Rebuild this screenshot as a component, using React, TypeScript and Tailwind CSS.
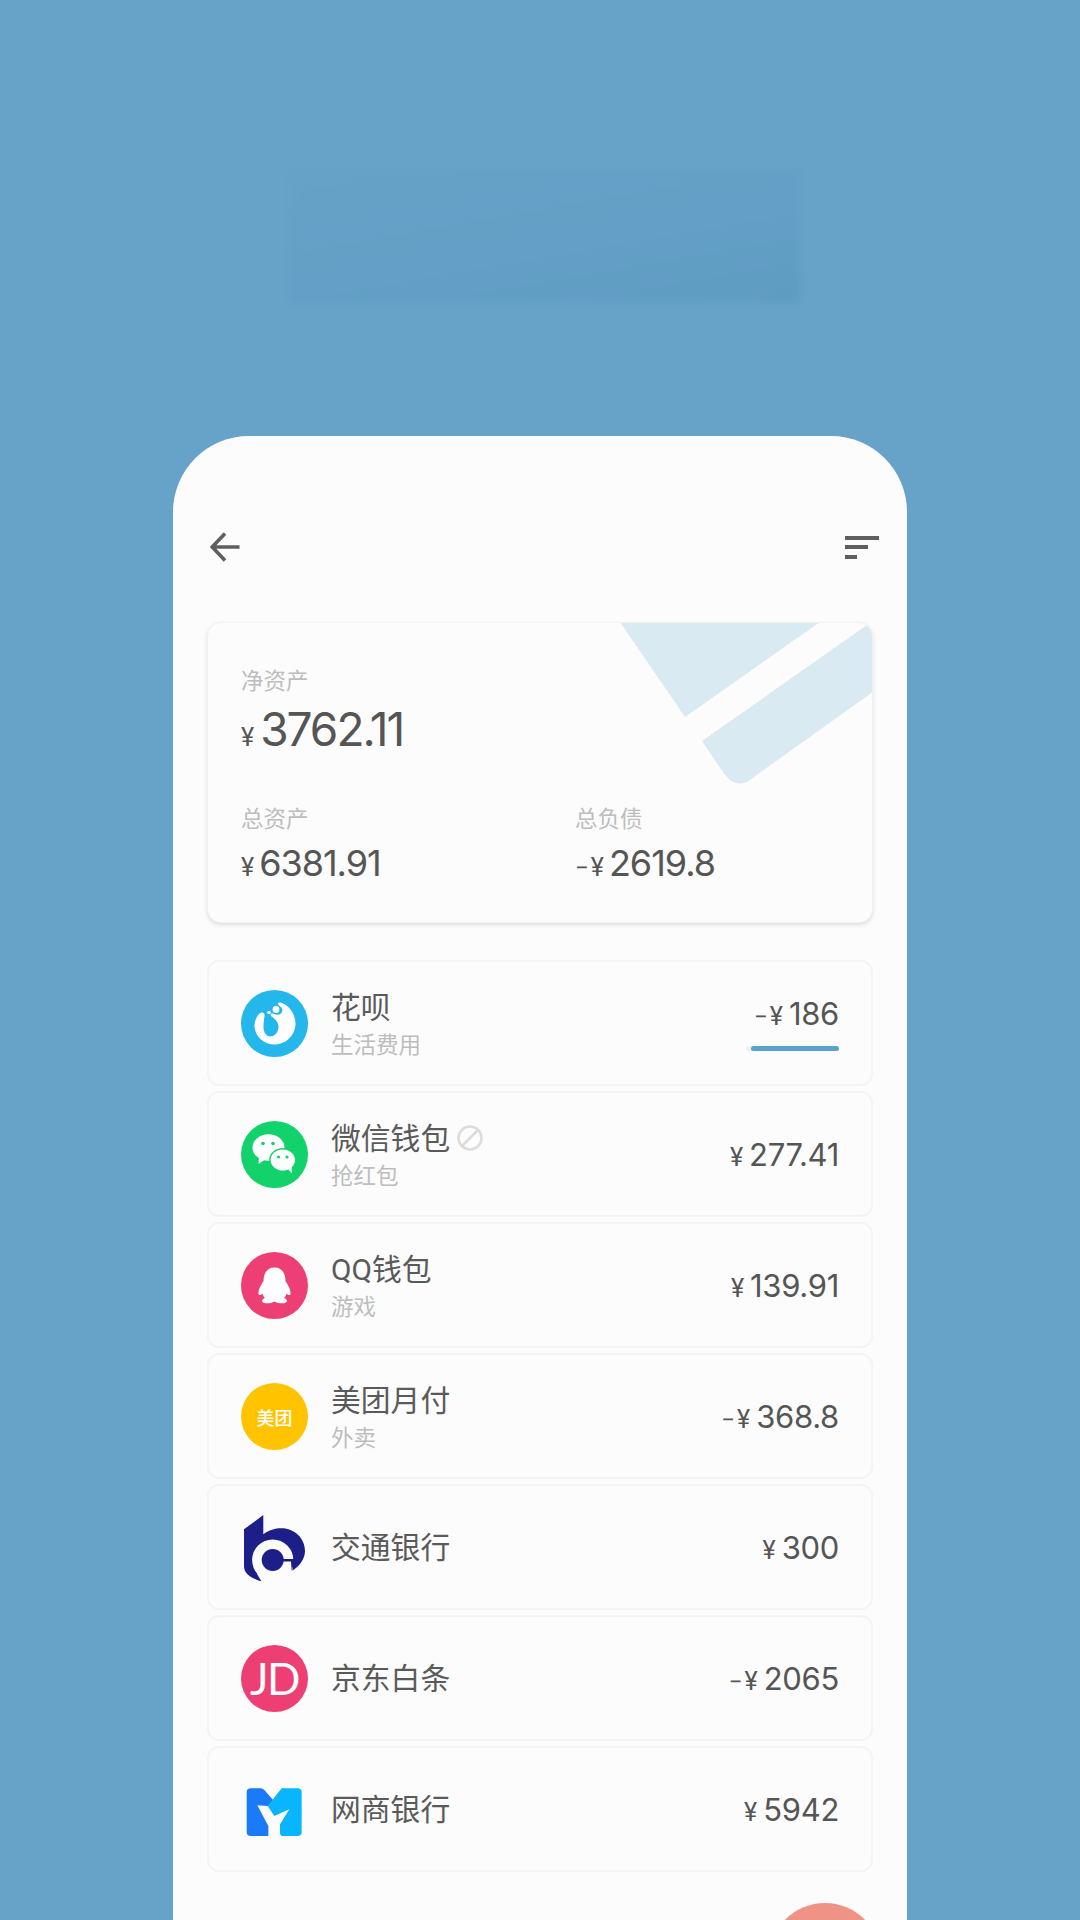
import React from "react";

const cjk = "font-['Noto_Sans_CJK_SC','Noto_Sans',sans-serif]";
const title = "font-['Roboto','Noto_Sans_CJK_SC',sans-serif]";
const num = "font-['Inter','Noto_Sans_CJK_SC',sans-serif]";
const yen = "font-['Roboto',sans-serif]";

function Circle({ color, children }: { color: string; children?: React.ReactNode }) {
  return (
    <svg width="67" height="67" viewBox="0 0 67 67" className="shrink-0">
      <circle cx="33.5" cy="33.5" r="33.5" fill={color} />
      {children}
    </svg>
  );
}

const Huabei = () => (
  <Circle color="#23b7ec">
    <path fill="#fff" d="M20.5 22.5C17 23 13 31 13.5 37C14.5 47 23 54.5 33.5 54.5C45 54.5 54.5 45 54.5 33.5C54.5 24 48 15 39.5 12.5C37 12 36 14 38 15.5C41 17 42 20 41 22C39.5 25 36 25.5 33 24C31 23 29 24 30 26C34 29 37.5 32 37.5 37C37.5 42 33.5 46.5 29.5 46.5C25 46.5 22.5 42 22.5 37C22.5 33 23 29 23.5 26.5C24 23.5 22.5 22.2 20.5 22.5Z" />
    <circle cx="35" cy="19.5" r="3.4" fill="#fff" />
    <circle cx="28" cy="22.5" r="1.8" fill="#fff" />
  </Circle>
);

const Wechat = () => (
  <Circle color="#12d26c">
    <ellipse cx="27.5" cy="26.5" rx="16" ry="13.2" fill="#fff" />
    <path fill="#fff" d="M18 35L17.5 43L25 38Z" />
    <ellipse cx="41.8" cy="39" rx="13.6" ry="12" fill="#12d26c" />
    <ellipse cx="41.8" cy="39" rx="12.2" ry="10.6" fill="#fff" />
    <path fill="#fff" d="M46 47L51 52.5L50.5 45Z" />
    <circle cx="22" cy="22.5" r="1.8" fill="#12d26c" />
    <circle cx="32" cy="22.5" r="1.8" fill="#12d26c" />
    <circle cx="37.5" cy="36" r="1.6" fill="#12d26c" />
    <circle cx="46" cy="36" r="1.6" fill="#12d26c" />
  </Circle>
);

const QQ = () => (
  <Circle color="#ee3f74">
    <path fill="#fff" d="M33.5 15.5C25 15.5 22.5 23 22.5 29C19.5 34 17 38 17.5 42C18 44 20 43 21.5 41.5C22 43.5 23 45 24 46C21.5 47 20 49 22 50.5C25 52 30 51.5 33.5 49.5C37 51.5 42 52 45 50.5C47 49 45.5 47 43 46C44 45 45 43.5 45.5 41.5C47 43 49 44 49.5 42C50 38 47.5 34 44.5 29C44.5 23 42 15.5 33.5 15.5Z" />
  </Circle>
);

const Meituan = () => (
  <div className="w-[67px] h-[67px] shrink-0 rounded-full bg-[#ffc300] flex items-center justify-center">
    <span className={`${cjk} text-white text-[18px] font-medium leading-none mt-[2px]`}>美团</span>
  </div>
);

const Bocom = () => (
  <svg width="67" height="67" viewBox="0 0 67 67" className="shrink-0">
    <path fill="#1b1f87" d="M3 15.3L22.3 1V20.3C28 16 34 14.3 40.7 14.3C53 14.3 64 24 64 37C64 45 58 53 50.7 57L52.3 46.3L30 60L20.7 67.7C10 64 3 60 3 52Z" />
    <circle cx="31.7" cy="46" r="20.6" fill="#fcfcfc" />
    <path fill="#fcfcfc" d="M16 60L20.7 67.7L50 67L52 52L30 55Z" />
    <circle cx="31.7" cy="46" r="11" fill="#1b1f87" />
    <path fill="#1b1f87" d="M35 45H54L50.7 57L50 47.5H35Z" />
  </svg>
);

const JD = () => (
  <div className="w-[67px] h-[67px] shrink-0 rounded-full bg-[#ee3f74] flex items-center justify-center">
    <span className="font-['Lato',sans-serif] font-normal text-white text-[44px] leading-none tracking-[-1.5px]">JD</span>
  </div>
);

const MyBank = () => (
  <svg width="67" height="67" viewBox="33 15 201 201" className="shrink-0">
    <path fill="#1a7af8" d="M62 52H92Q98 52 103 57L132 90L113 105L82 103L115 165V195H62Q50 195 50 183V64Q50 52 62 52Z" />
    <path fill="#0ab5ff" d="M155 52H203Q215 52 215 64V183Q215 195 203 195H160Q150 195 150 185V160L178 115L133 135L113 105Z" />
  </svg>
);

function Amount({ neg, value, big }: { neg?: boolean; value: string; big?: boolean }) {
  return (
    <span className={`${num} inline-flex items-baseline text-[#555] leading-none`}>
      {neg && <span className={`${yen} text-[24px] mr-[2px]`}>−</span>}
      <span className={`${yen} text-[25px] ${big ? "mr-[5px]" : "mr-[6px]"}`}>¥</span>
      <span className={big ? "text-[36px] tracking-[-1px]" : "text-[31px] tracking-[-0.3px]"}>{value}</span>
    </span>
  );
}

const rows = [
  { icon: <Huabei />, title: "花呗", sub: "生活费用", neg: true, value: "186", bar: true },
  { icon: <Wechat />, title: "微信钱包", sub: "抢红包", value: "277.41", ban: true },
  { icon: <QQ />, title: "QQ钱包", sub: "游戏", value: "139.91" },
  { icon: <Meituan />, title: "美团月付", sub: "外卖", neg: true, value: "368.8" },
  { icon: <Bocom />, title: "交通银行", value: "300" },
  { icon: <JD />, title: "京东白条", neg: true, value: "2065" },
  { icon: <MyBank />, title: "网商银行", value: "5942" },
];

function Row({ r }: { r: (typeof rows)[number] }) {
  return (
    <div className="relative h-[126px] rounded-[12px] border-2 border-[#f4f4f4] bg-[#fcfcfc] flex items-center pl-[32px] pr-[32px]">
      {r.icon}
      <div className="ml-[23px] flex-1 flex flex-col mt-[-2px]">
        <div className="flex items-center h-[40px]">
          <span className={`${title} text-[29.8px] leading-[40px] mt-[4px] text-[#5a5a5a]`}>{r.title}</span>
          {r.ban && (
            <svg width="26" height="26" viewBox="0 0 26 26" className="ml-[7px] mt-[2px]">
              <circle cx="13" cy="13" r="11.5" fill="none" stroke="#dcdcdc" strokeWidth="2.6" />
              <path d="M21 5L5 21" stroke="#dcdcdc" strokeWidth="2.6" />
            </svg>
          )}
        </div>
        {r.sub && <span className={`${cjk} text-[22.5px] leading-[30px] mt-[2px] text-[#bdbdbd]`}>{r.sub}</span>}
      </div>
      {r.bar ? (
        <div className="flex flex-col items-end mt-[2px]">
          <Amount neg={r.neg} value={r.value} />
          <div className="relative mt-[17px] w-[93px] h-[5px] rounded-full bg-[#eeeeee]">
            <div className="absolute right-0 top-0 h-[5px] w-[88px] rounded-full bg-[#5ba3cf]" />
          </div>
        </div>
      ) : (
        <Amount neg={r.neg} value={r.value} />
      )}
    </div>
  );
}

export default function App() {
  return (
    <div className="relative w-[1080px] h-[1920px] overflow-hidden bg-[#67a2c9] pt-[436px] pl-[173px]">
      <div className="absolute left-[290px] top-[172px] w-[510px] h-[130px] bg-[linear-gradient(170deg,#66a1c8_0%,#639fc6_55%,#5f9cc2_100%)] blur-[3px]" />
      <div className="relative w-[734px] h-[1484px] bg-[#fcfcfc] rounded-t-[76px] px-[34px] pt-[96px]">
        <div className="flex items-center justify-between h-[30px] mr-[-6px] ml-[3px]">
          <svg width="30" height="30" viewBox="0 0 30 30">
            <path d="M29.5 15H3M15 1.5L2.2 15L15 28.5" fill="none" stroke="#5f5f5f" strokeWidth="3.6" />
          </svg>
          <div className="w-[34px] flex flex-col gap-[5.5px]">
            <div className="h-[4px] w-[34px] bg-[#5f5f5f]" />
            <div className="h-[4px] w-[23px] bg-[#5f5f5f]" />
            <div className="h-[4px] w-[12px] bg-[#5f5f5f]" />
          </div>
        </div>

        <div className="relative mt-[60px] h-[301px] rounded-[14px] bg-[#fcfcfc] border border-[#f2f2f2] shadow-[0_2px_4px_rgba(0,0,0,0.12)] overflow-hidden pl-[33px] pt-[41px]">
          <svg width="667" height="301" viewBox="0 0 667 301" className="absolute left-[-1px] top-[-1px]">
            <path fill="#d9eaf3" d="M413 0H613L478 95Z" />
            <path fill="#d9eaf3" d="M495 119L660 3L667 8V69L540 160Q531 164 523 158L518 153Z" />
          </svg>
          <div className="relative flex flex-col">
            <span className={`${cjk} text-[22.5px] leading-[30px] text-[#bdbdbd]`}>净资产</span>
            <span className="mt-[6px] h-[52px] flex items-end">
              <span className={`${num} inline-flex items-baseline text-[#555] leading-none`}>
                <span className={`${yen} text-[25px] mr-[6px]`}>¥</span>
                <span className="text-[46px] tracking-[-2px]">3762.11</span>
              </span>
            </span>
            <div className="mt-[50px] grid grid-cols-[334px_1fr]">
              <div className="flex flex-col">
                <span className={`${cjk} text-[22.5px] leading-[30px] text-[#bdbdbd]`}>总资产</span>
                <span className="mt-[13px]"><Amount value="6381.91" big /></span>
              </div>
              <div className="flex flex-col">
                <span className={`${cjk} text-[22.5px] leading-[30px] text-[#bdbdbd]`}>总负债</span>
                <span className="mt-[13px]"><Amount neg value="2619.8" big /></span>
              </div>
            </div>
          </div>
        </div>

        <div className="mt-[37px] flex flex-col gap-[5px]">
          {rows.map((r) => (
            <Row key={r.title} r={r} />
          ))}
        </div>

        <div className="absolute left-[596px] top-[1467px] w-[112px] h-[112px] rounded-full bg-[#ee9386]" />
      </div>
    </div>
  );
}
